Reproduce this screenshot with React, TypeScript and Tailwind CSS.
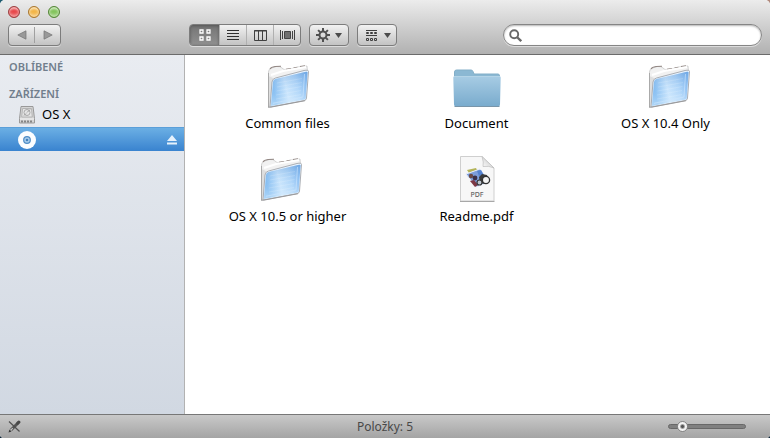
import { useState } from 'react';
import type { ReactNode } from 'react';

const buttonFrame =
  'rounded-[4px] border border-[#7c7c7c] bg-linear-to-b from-[#f2f2f2] to-[#c3c3c3] shadow-[0_1px_0_#dcdcdc]';

function TrafficLight({ label, className }: { label: string; className: string }) {
  return (
    <button
      type="button"
      aria-label={label}
      className={`size-3 rounded-full border shadow-[inset_0_3px_2px_-1px_rgba(255,255,255,0.6),inset_0_-3px_3px_-1px_rgba(255,255,255,0.5)] ${className}`}
    />
  );
}

function Arrow({ direction }: { direction: 'left' | 'right' }) {
  return (
    <svg width="10" height="10" viewBox="0 0 10 10">
      <path
        d={direction === 'left' ? 'M9 .8v8.4L.8 5z' : 'M1 .8v8.4L9.2 5z'}
        fill="#999"
        stroke="#747474"
        strokeWidth=".7"
      />
    </svg>
  );
}

function DownArrow() {
  return (
    <svg width="7" height="5" viewBox="0 0 7 5">
      <path d="M0 0h7L3.500 5z" fill="#4c4c4c" />
    </svg>
  );
}

function GridIcon() {
  return (
    <svg width="12" height="12" viewBox="0 0 12 12" fill="none" stroke="#fff" strokeWidth="1.300">
      <path d="M1 1h3v3H1zM8 1h3v3H8zM1 8h3v3H1zM8 8h3v3H8z" />
    </svg>
  );
}

function ListIcon() {
  return (
    <svg width="12" height="12" viewBox="0 0 12 12" stroke="#303030">
      <path d="M0 1.500h12M0 4.500h12M0 7.500h12M0 10.500h12" />
    </svg>
  );
}

function ColumnsIcon() {
  return (
    <svg width="13" height="11" viewBox="0 0 13 11" fill="none" stroke="#404040">
      <path d="M.5.500h12v10H.5zM4.500.500v10M8.500.500v10M0 1h13" />
    </svg>
  );
}

function CoverFlowIcon() {
  return (
    <svg width="15" height="10" viewBox="0 0 15 10">
      <path d="M.5 0v10M2.500 1v8M12.500 1v8M14.500 0v10" stroke="#444" />
      <path d="M4.500 1.500h6v7h-6z" fill="#707070" stroke="#454545" />
    </svg>
  );
}

function GearIcon() {
  return (
    <svg width="14" height="14" viewBox="0 0 14 14" fill="none" stroke="#505050">
      <circle cx="7" cy="7" r="3.500" strokeWidth="2" />
      <path
        d="M7 0v3M7 11v3M0 7h3M11 7h3M2.100 2.100l2 2M9.900 9.900l2 2M11.900 2.100l-2 2M4.100 9.900l-2 2"
        strokeWidth="2"
      />
      <circle cx="7" cy="7" r="1" fill="#dcdcdc" stroke="none" />
    </svg>
  );
}

function ArrangeIcon() {
  return (
    <svg width="11" height="11" viewBox="0 0 11 11" fill="none" stroke="#3f3f3f">
      <path d="M0 .5h11M0 5.500h11" />
      <path d="M.5 2.500h2v1h-2zM4.500 2.500h2v1h-2zM8.500 2.500h2v1h-2zM.5 8.500h2v2h-2zM4.500 8.500h2v2h-2zM8.500 8.500h2v2h-2z" />
    </svg>
  );
}

function SearchIcon() {
  return (
    <svg width="13" height="13" viewBox="0 0 13 13" fill="none" stroke="#686868">
      <circle cx="5.200" cy="5.200" r="4" strokeWidth="1.900" />
      <path d="M8.200 8.200l4 4" strokeWidth="2.300" />
    </svg>
  );
}

function DriveIcon() {
  return (
    <svg width="16" height="18" viewBox="0 0 16 18" fill="none">
      <path d="M2 .5h12l1.500 12v4.500H.5v-4.500z" fill="#d5d5d5" stroke="#999" />
      <path d="M3.500 2.500h9l.8 8.500H2.700z" fill="#e5e5e5" stroke="#b4b4b4" />
      <circle cx="8" cy="6.500" r="3" stroke="#aaa" />
      <path d="M8 6.500l3-3M5 9.500l2-2" stroke="#999" />
      <path d="M1 13h14" stroke="#f5f5f5" />
      <path d="M2 15.500h12" stroke="#858585" strokeWidth="2" strokeDasharray="2 1" />
    </svg>
  );
}

function DiscIcon() {
  return (
    <svg width="18" height="18" viewBox="0 0 18 18" fill="none">
      <circle cx="9" cy="9" r="9" fill="#fbfdff" />
      <circle cx="9" cy="9" r="3.300" fill="#a9cdec" stroke="#4e8cc6" strokeWidth="1.200" />
      <circle cx="9" cy="9" r="1.300" fill="#3f7fbd" />
    </svg>
  );
}

function PencilOffIcon() {
  return (
    <svg width="13" height="13" viewBox="0 0 13 13" fill="none">
      <path d="M3 10L9.500 3.500" stroke="#555" strokeWidth="3" />
      <path d="M9.800 3.200l1-1" stroke="#484848" strokeWidth="3.200" strokeLinecap="round" />
      <path d="M.5 12.500l1-3 2 2z" fill="#333" />
      <path d="M2.800 10.200l2-2" stroke="#c5c5c5" strokeWidth="1.200" />
      <path d="M1 1.500l10.500 10" stroke="#505050" strokeWidth="1.200" />
    </svg>
  );
}

function TiltedFolder({ x }: { x: number }) {
  return (
    <svg width="64" height="48" viewBox="0 0 64 48" fill="none">
      <defs>
        <linearGradient id="sheet" x1="0" y1=".2" x2="1" y2="0">
          <stop offset="0" stopColor="#7db9f0" />
          <stop offset=".35" stopColor="#d2eafe" />
          <stop offset=".65" stopColor="#b5d9fa" />
          <stop offset="1" stopColor="#76b1ef" />
        </linearGradient>
        <linearGradient id="sheetGlow" x1="0" y1="0" x2="0" y2="1">
          <stop offset="0" stopColor="#5d94d2" stopOpacity=".4" />
          <stop offset=".5" stopColor="#a8d0f6" stopOpacity=".2" />
          <stop offset="1" stopColor="#e4f5ff" stopOpacity=".5" />
        </linearGradient>
      </defs>
      <g transform={`translate(${x} 0)`}>
        <path
          d="M1.500 44V10q0-3 3-4l5-1.500q4-.5 5.500 1.500l2 1.500 6-.5 8-2 9-1 .5 6-24 5z"
          fill="#f1f1f1"
          stroke="#c9c9c9"
          strokeWidth=".8"
        />
        <path d="M3 7q1-2 5-2.500l6-.2M19 7.200l5-.7M26.500 6l4-.8M33 4.500l5-.8" stroke="#938884" strokeWidth="1.100" />
        <path d="M4 13l12-4 23-4" stroke="#fff" strokeWidth="2" />
        <path d="M1.500 45V14l4.500 2-3 29z" fill="#dedede" />
        <path d="M1.500 45V11" stroke="#aaa" />
        <path
          d="M5 20q.5-3.500 3.500-4L37 8.500q4.500-1 4.500 1L39.500 36q0 2-2 2.500L3 45z"
          fill="#e9f4ff"
          stroke="#a3a6ab"
          strokeWidth=".9"
        />
        <path d="M6 20q.5-2.500 2.500-3l29.500-7q2.500-.5 2.500 .5L38.700 36q0 1-1.500 1.500L4 43.800z" fill="url(#sheet)" />
        <path d="M6 20q.5-2.500 2.500-3l29.500-7q2.500-.5 2.500 .5L38.700 36q0 1-1.500 1.500L4 43.800z" fill="url(#sheetGlow)" />
        <path
          d="M10 21l25-4.500M10 25l25-4.500M9.500 29l25-4.500M9 33l25-4.500M9 37l25-4.500"
          stroke="#fff"
          strokeOpacity=".16"
        />
        <path d="M37.500 12l-1.500 23-30 6.300" stroke="#cfe6fd" strokeOpacity=".6" />
        <path d="M1 45.200h2.500L38 38.700" stroke="#9a9a9c" />
      </g>
    </svg>
  );
}

function BlueFolder() {
  return (
    <svg width="64" height="48" viewBox="0 0 64 48" fill="none">
      <defs>
        <linearGradient id="folderFront" x1="0" y1="0" x2="0" y2="1">
          <stop offset="0" stopColor="#a7cce4" />
          <stop offset="1" stopColor="#79abcd" />
        </linearGradient>
      </defs>
      <path d="M9.500 14V10q0-2 2-2H26q1.500 0 2 1.500l1 2.500h24q1.500 0 1.500 2v4h-45z" fill="#8bb8d3" stroke="#82aec8" />
      <path d="M8.300 15.500q0-1.500 1.500-1.500h44.400q1.500 0 1.500 1.500l-.7 27q0 2-2 2H11q-2 0-2-2z" fill="url(#folderFront)" />
      <path d="M9 14.500h46" stroke="#b4d4e7" />
      <path d="M9.500 44.500h45" stroke="#7995a9" />
    </svg>
  );
}

function PdfFile() {
  return (
    <svg width="64" height="48" viewBox="0 0 64 48" fill="none">
      <defs>
        <linearGradient id="paperCurl" x1="0" y1="1" x2="1" y2="0">
          <stop offset="0" stopColor="#fff" />
          <stop offset="1" stopColor="#bdbdbd" />
        </linearGradient>
      </defs>
      <path d="M15.500 1.500H37L49 13v33H15.500z" fill="#f7f7f7" stroke="#cfcfcf" />
      <path d="M15 46.500h34.500" stroke="#a8a8a8" />
      <path d="M37 1.500q2 6 1 10 6-1 11 1.500z" fill="url(#paperCurl)" stroke="#bcbcbc" strokeWidth=".7" />
      <path d="M22 15l9-2 1 2-8 3z" fill="#b4b45a" />
      <path d="M21 19l14-5 9 13-13 5z" fill="#7d9edb" stroke="#e9eef9" />
      <path d="M32 16l4-1 3 5-5 1z" fill="#5482cf" />
      <circle cx="26" cy="21" r="2.200" fill="#6d4a45" />
      <circle cx="30" cy="23" r="2.400" fill="#3c3148" />
      <path d="M25 26l4-1 4 5-3 2z" fill="#7d3844" />
      <path d="M34 22l3-3 5 1 2 5-4 4-5-1z" fill="#3a3a3a" />
      <circle cx="41" cy="25" r="3.600" fill="#f3f3f3" stroke="#303030" strokeWidth="1.300" />
      <circle cx="34.500" cy="27.500" r="2.500" fill="#bcc3cd" stroke="#363636" strokeWidth="1.200" />
      <text x="32" y="42" textAnchor="middle" fill="#666" fontSize="7" fontWeight="500" fontFamily="'Noto Sans', sans-serif">
        PDF
      </text>
    </svg>
  );
}

const files: { name: string; icon: ReactNode }[] = [
  { name: 'Common files', icon: <TiltedFolder x={11} /> },
  { name: 'Document', icon: <BlueFolder /> },
  { name: 'OS X 10.4 Only', icon: <TiltedFolder x={14} /> },
  { name: 'OS X 10.5 or higher', icon: <TiltedFolder x={4} /> },
  { name: 'Readme.pdf', icon: <PdfFile /> },
];

const views: { label: string; icon: ReactNode }[] = [
  { label: 'Ikony', icon: <GridIcon /> },
  { label: 'Seznam', icon: <ListIcon /> },
  { label: 'Sloupce', icon: <ColumnsIcon /> },
  { label: 'Cover Flow', icon: <CoverFlowIcon /> },
];

function Toolbar() {
  return (
    <header className="flex flex-col border-b border-[#6b6b6b] bg-linear-to-b from-[#ececec] to-[#b1b1b1] pb-2">
      <div className="flex h-6 items-center gap-2 px-2">
        <TrafficLight label="Zavřít" className="border-[#994344] bg-[#e8474a]" />
        <TrafficLight label="Minimalizovat" className="border-[#a77734] bg-[#f3b546]" />
        <TrafficLight label="Zvětšit" className="border-[#56853b] bg-[#83c45c]" />
      </div>
      <div className="flex items-center px-2">
        <div className="flex w-45 shrink-0">
          <div className={`flex h-[22px] w-[53px] items-center ${buttonFrame}`}>
            <button type="button" aria-label="Zpět" className="flex flex-1 justify-center">
              <Arrow direction="left" />
            </button>
            <span className="h-4 w-px bg-[#a0a0a0]" />
            <button type="button" aria-label="Vpřed" className="flex flex-1 justify-center">
              <Arrow direction="right" />
            </button>
          </div>
        </div>
        <div className={`ml-px flex h-[22px] w-28 shrink-0 overflow-hidden ${buttonFrame}`}>
          {views.map((view, i) => (
            <button
              key={view.label}
              type="button"
              aria-label={view.label}
              aria-pressed={i === 0}
              className="flex flex-1 items-center justify-center border-l border-[#b0b0b0] first:w-[29px] first:flex-none first:border-l-0 aria-pressed:bg-linear-to-b aria-pressed:from-[#747474] aria-pressed:to-[#909090] aria-pressed:shadow-[inset_0_1px_3px_#555]"
            >
              {view.icon}
            </button>
          ))}
        </div>
        <button
          type="button"
          aria-label="Akce"
          className={`ml-2 flex h-[22px] w-10 shrink-0 items-center justify-center gap-[5px] ${buttonFrame}`}
        >
          <GearIcon />
          <DownArrow />
        </button>
        <button
          type="button"
          aria-label="Uspořádat"
          className={`ml-2 flex h-[22px] w-10 shrink-0 items-center justify-end gap-[7px] pr-[5px] ${buttonFrame}`}
        >
          <ArrangeIcon />
          <DownArrow />
        </button>
        <label className="ml-auto flex h-[22px] w-[259px] items-center gap-1 rounded-full border border-[#858585] bg-white px-[5px] shadow-[inset_0_1px_2px_#b5b5b5,0_1px_0_#dcdcdc]">
          <SearchIcon />
          <input type="search" aria-label="Hledat" className="min-w-0 flex-1 text-[13px] outline-none" />
        </label>
      </div>
    </header>
  );
}

function Sidebar() {
  return (
    <nav className="w-[185px] shrink-0 border-r border-[#b2b2b2] bg-linear-to-b from-[#e9ecf1] to-[#d1d8e2] pt-[3px]">
      <h2 className="px-[9px] text-[11px] leading-[18px] font-semibold text-[#717e8c]">OBLÍBENÉ</h2>
      <h2 className="mt-[9px] px-[9px] text-[11px] leading-[18px] font-semibold text-[#717e8c]">ZAŘÍZENÍ</h2>
      <ul>
        <li>
          <a href="#osx" className="flex h-6 items-center gap-[7px] pl-[19px]">
            <DriveIcon />
            OS X
          </a>
        </li>
        <li className="flex h-6 items-center border-t border-[#5b9fd9] bg-linear-to-b from-[#6bafe4] to-[#3983cf] pr-[7px] pl-[18px]">
          <a href="#disc" aria-label="Disk" aria-current="true" className="flex-1">
            <DiscIcon />
          </a>
          <button type="button" aria-label="Vysunout">
            <svg width="10" height="10" viewBox="0 0 10 10" fill="#e5f1fc">
              <path d="M5 0l5 6H0zM0 7.500h10v2H0z" />
            </svg>
          </button>
        </li>
      </ul>
    </nav>
  );
}

function StatusBar() {
  const [size, setSize] = useState(12);
  return (
    <footer className="grid h-6 grid-cols-[1fr_auto_1fr] items-center border-t border-[#777] bg-linear-to-b from-[#c9c9c9] to-[#a4a4a4] pr-6 pl-2">
      <PencilOffIcon />
      <p className="pl-4 text-xs text-[#484848]">Položky: 5</p>
      <input
        type="range"
        aria-label="Velikost ikon"
        min={0}
        max={100}
        value={size}
        onChange={(e) => setSize(Number(e.target.value))}
        className="h-3 w-[78px] appearance-none justify-self-end bg-transparent [&::-webkit-slider-runnable-track]:h-[5px] [&::-webkit-slider-runnable-track]:rounded-full [&::-webkit-slider-runnable-track]:border [&::-webkit-slider-runnable-track]:border-[#686868] [&::-webkit-slider-runnable-track]:bg-[#808080] [&::-webkit-slider-thumb]:mt-[-4px] [&::-webkit-slider-thumb]:size-[11px] [&::-webkit-slider-thumb]:appearance-none [&::-webkit-slider-thumb]:rounded-full [&::-webkit-slider-thumb]:border [&::-webkit-slider-thumb]:border-[#858585] [&::-webkit-slider-thumb]:bg-[radial-gradient(circle,#555_1px,#f4f4f4_3px)]"
      />
    </footer>
  );
}

export default function App() {
  return (
    <div className="h-screen bg-[linear-gradient(to_bottom,transparent_50%,#0c2438_50%),linear-gradient(to_right,#1d5a6e,#b0897c)] font-['Lucida_Grande','Noto_Sans',sans-serif] text-[13px] text-black">
      <div className="flex h-full flex-col overflow-hidden rounded-t-[5px] rounded-b-[4px] bg-white">
        <Toolbar />
        <div className="flex min-h-0 flex-1">
          <Sidebar />
          <main className="min-w-0 flex-1 overflow-auto">
            <ul className="grid grid-cols-3 gap-y-[22px] pt-[7px] pr-[10px] pl-2">
              {files.map((file) => (
                <li key={file.name} className="flex flex-col items-center gap-[3px] leading-5">
                  {file.icon}
                  {file.name}
                </li>
              ))}
            </ul>
          </main>
        </div>
        <StatusBar />
      </div>
    </div>
  );
}
